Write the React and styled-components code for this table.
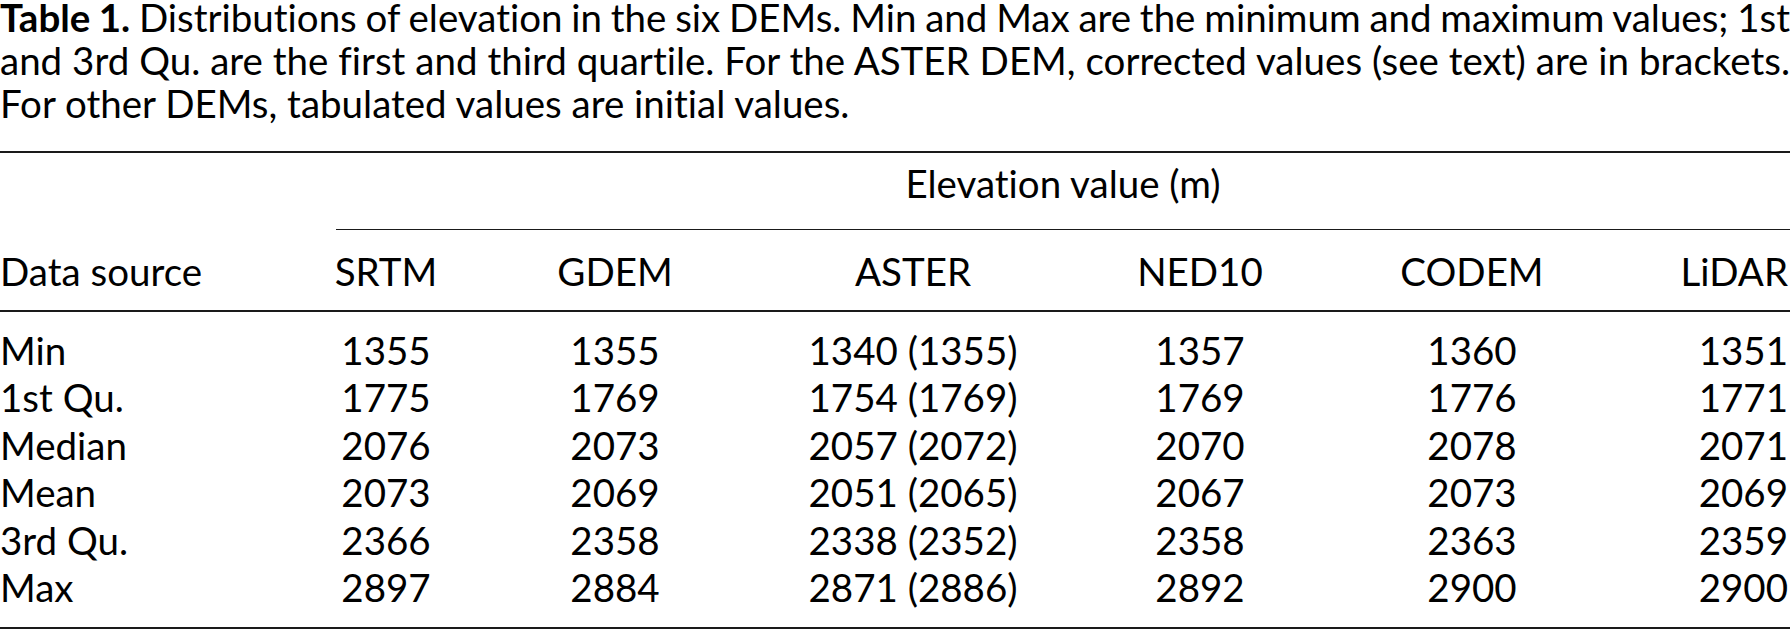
import React from "react";
import styled, { createGlobalStyle } from "styled-components";

const columns = "300px 172px 286px 310px 264px 280px 178px";

const GlobalStyle = createGlobalStyle`
  html, body {
    margin: 0;
    padding: 0;
    background: #ffffff;
  }
  body {
    font-family: Lato, "Open Sans", "Liberation Sans", sans-serif;
    font-variant-ligatures: none;
    color: #000000;
    overflow: hidden;
  }
`;

const Page = styled.div`
  width: 1790px;
  height: 631px;
  overflow: hidden;
  font-size: 38.5px;
`;

const Caption = styled.div`
  margin-top: -4.4px;
  line-height: 43px;
`;

const CaptionLine = styled.p`
  margin: 0;
  white-space: nowrap;
  text-align: justify;
  text-align-last: ${(p) => (p.$last ? "left" : "justify")};
  word-spacing: ${(p) => (p.$last ? "0" : "-4px")};
`;

const Label = styled.b`
  font-weight: 700;
`;

const Table = styled.div`
  margin-top: 26.1px;
  border-top: 2px solid #1a1a1a;
  border-bottom: 2px solid #1a1a1a;
`;

const Row = styled.div`
  display: grid;
  grid-template-columns: ${columns};
  line-height: ${(p) => p.$lh || "44px"};
`;

const SpanRow = styled(Row)`
  padding-top: 8.4px;
`;

const SpanCell = styled.div`
  grid-column: 2 / -1;
  margin-left: 36px;
  padding-bottom: 24.4px;
  border-bottom: 1.5px solid #1a1a1a;
  text-align: center;
`;

const HeadRow = styled(Row)`
  padding: 18.1px 0 17.6px;
  border-bottom: 2px solid #1a1a1a;
`;

const Body = styled.div`
  padding: 14.6px 0 15.6px;
`;

const Cell = styled.div`
  text-align: ${(p) => p.$align || "center"};
  padding-right: ${(p) => (p.$align === "right" ? "2px" : "0")};
  white-space: nowrap;
`;

const heads = ["SRTM", "GDEM", "ASTER", "NED10", "CODEM", "LiDAR"];

const rows = [
  ["Min", "1355", "1355", "1340 (1355)", "1357", "1360", "1351"],
  ["1st Qu.", "1775", "1769", "1754 (1769)", "1769", "1776", "1771"],
  ["Median", "2076", "2073", "2057 (2072)", "2070", "2078", "2071"],
  ["Mean", "2073", "2069", "2051 (2065)", "2067", "2073", "2069"],
  ["3rd Qu.", "2366", "2358", "2338 (2352)", "2358", "2363", "2359"],
  ["Max", "2897", "2884", "2871 (2886)", "2892", "2900", "2900"],
];

// first column left, last column flush right, the rest centred
const alignFor = (i, n) => (i === 0 ? "left" : i === n - 1 ? "right" : "center");

export default function App() {
  return (
    <Page>
      <GlobalStyle />
      <Caption>
        <CaptionLine>
          <Label>Table 1.</Label> Distributions of elevation in the six DEMs.
          Min and Max are the minimum and maximum values; 1st
        </CaptionLine>
        <CaptionLine>
          and 3rd Qu. are the first and third quartile. For the ASTER DEM,
          corrected values (see text) are in brackets.
        </CaptionLine>
        <CaptionLine $last>
          For other DEMs, tabulated values are initial values.
        </CaptionLine>
      </Caption>
      <Table>
        <SpanRow>
          <SpanCell>Elevation value (m)</SpanCell>
        </SpanRow>
        <HeadRow>
          {["Data source", ...heads].map((h, i) => (
            <Cell key={h} $align={alignFor(i, 7)}>
              {h}
            </Cell>
          ))}
        </HeadRow>
        <Body>
          {rows.map((r) => (
            <Row key={r[0]} $lh="47.5px">
              {r.map((v, i) => (
                <Cell key={i} $align={alignFor(i, r.length)}>
                  {v}
                </Cell>
              ))}
            </Row>
          ))}
        </Body>
      </Table>
    </Page>
  );
}
